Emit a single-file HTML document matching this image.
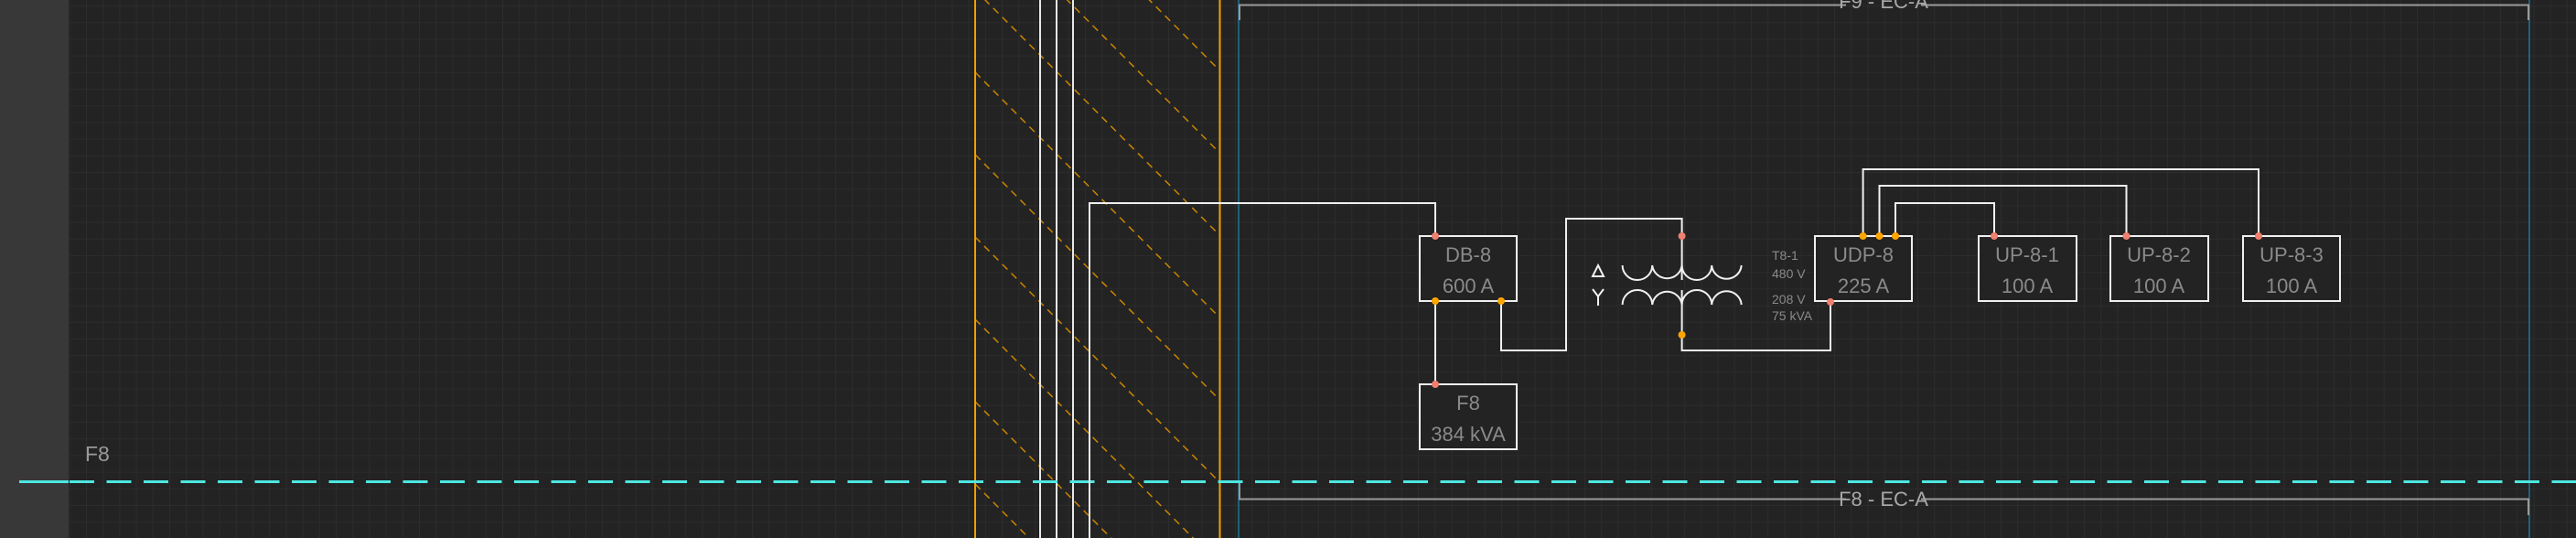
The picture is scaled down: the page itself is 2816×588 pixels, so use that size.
<!DOCTYPE html>
<html><head><meta charset="utf-8"><style>
html,body{margin:0;padding:0;background:#232323;overflow:hidden;width:2816px;height:588px}
svg{display:block}
text{font-family:"Liberation Sans",sans-serif}
</style></head><body>
<svg width="2816" height="588" viewBox="0 0 2816 588" xmlns="http://www.w3.org/2000/svg">
<defs>
<pattern id="g" x="3" y="6" width="18.2" height="18.2" patternUnits="userSpaceOnUse">
<path d="M0 0.5H18.2M0.5 0V18.2" stroke="#2c2c2c" stroke-width="1" fill="none"/>
</pattern>
<clipPath id="hc"><rect x="1066" y="0" width="267" height="588"/></clipPath>
</defs>
<rect width="2816" height="588" fill="#232323"/>
<rect width="2816" height="588" fill="url(#g)"/>
<rect x="0" y="0" width="75" height="588" fill="#383838"/>

<g clip-path="url(#hc)" stroke="#c98500" stroke-width="1.5" stroke-dasharray="8 6" fill="none">
<path d="M1066 -281L1400 54M1066 -191L1400 144M1066 -101L1400 234M1066 -11L1400 324M1066 79L1400 414M1066 169L1400 504M1066 259L1400 594M1066 349L1400 684M1066 439L1400 774M1066 529L1400 864"/>
</g>
<path d="M1066 0V588M1333.5 0V588" stroke="#f0a000" stroke-width="2"/>
<path d="M1137 0V588M1155 0V588M1173 0V588" stroke="#e8e8e8" stroke-width="2"/>
<path d="M1354 0V588M2765 0V588" stroke="#1aa0d0" stroke-width="1"/>

<g stroke="#9a9a9a" stroke-width="2" fill="none">
<path d="M1355 22V5.5H2018M2100 5.5H2764V22"/>
<path d="M1355 528V545.5H2018M2100 545.5H2764V563"/>
</g>
<text x="2059" y="9" font-size="22" fill="#a8a8a8" text-anchor="middle">F9 - EC-A</text>
<text x="2059" y="553" font-size="22" fill="#a8a8a8" text-anchor="middle">F8 - EC-A</text>

<path d="M21 526.5H75" stroke="#4de8e0" stroke-width="3"/>
<path d="M76 526.5H2816" stroke="#4de8e0" stroke-width="3" stroke-dasharray="27 13.5"/>
<text x="93" y="504" font-size="23" fill="#9a9a9a">F8</text>

<g stroke="#f0f0f0" stroke-width="2" fill="none">
<path d="M1191 588V222H1569V258"/>
<path d="M1569 329V420"/>
<path d="M1641 329V383H1712V239H1838.6V306"/>
<path d="M1838.6 317V383H2001V329"/>
<path d="M2036.6 258V185H2469V258"/>
<path d="M2054.5 258V203H2324.5V258"/>
<path d="M2072 258V222H2180V258"/>
</g>

<g stroke="#f0f0f0" stroke-width="2" fill="#232323">
<rect x="1552" y="258" width="106" height="71"/>
<rect x="1552" y="420" width="106" height="71"/>
<rect x="1984" y="258" width="106" height="71"/>
<rect x="2163" y="258" width="107" height="71"/>
<rect x="2307" y="258" width="107" height="71"/>
<rect x="2452" y="258" width="106" height="71"/>
</g>
<g font-size="22" fill="#8a8a8a" text-anchor="middle">
<text x="1605" y="286">DB-8</text><text x="1605" y="320">600 A</text>
<text x="1605" y="448">F8</text><text x="1605" y="482">384 kVA</text>
<text x="2037" y="286">UDP-8</text><text x="2037" y="320">225 A</text>
<text x="2216" y="286">UP-8-1</text><text x="2216" y="320">100 A</text>
<text x="2360" y="286">UP-8-2</text><text x="2360" y="320">100 A</text>
<text x="2505" y="286">UP-8-3</text><text x="2505" y="320">100 A</text>
</g>

<g stroke="#f0f0f0" stroke-width="2" fill="none">
<path d="M1773.6 290A16.3 16 0 0 0 1806.2 290A16.3 16 0 0 0 1838.6 290A16.3 16 0 0 0 1871.2 290A16.3 16 0 0 0 1903.7 290"/>
<path d="M1773.6 333A16.3 16 0 0 1 1806.2 333A16.3 16 0 0 1 1838.6 333A16.3 16 0 0 1 1871.2 333A16.3 16 0 0 1 1903.7 333"/>
<path d="M1741 302L1747 290L1753 302Z"/>
<path d="M1741 316L1747 324L1753 316M1747 324V334"/>
</g>
<g font-size="14" fill="#8a8a8a">
<text x="1937" y="284">T8-1</text>
<text x="1937" y="304">480 V</text>
<text x="1937" y="332">208 V</text>
<text x="1937" y="350">75 kVA</text>
</g>

<g fill="#f08070">
<circle cx="1569" cy="258" r="4"/><circle cx="1569" cy="420" r="4"/>
<circle cx="1838.6" cy="258" r="4"/><circle cx="2001" cy="330" r="4"/>
<circle cx="2180" cy="258" r="4"/><circle cx="2324.5" cy="258" r="4"/><circle cx="2469" cy="258" r="4"/>
</g>
<g fill="#ffa500">
<circle cx="1569" cy="329" r="4"/><circle cx="1641" cy="329" r="4"/>
<circle cx="1838.6" cy="366" r="4"/>
<circle cx="2036.6" cy="258" r="4"/><circle cx="2054.5" cy="258" r="4"/><circle cx="2072" cy="258" r="4"/>
</g>
</svg>
</body></html>
